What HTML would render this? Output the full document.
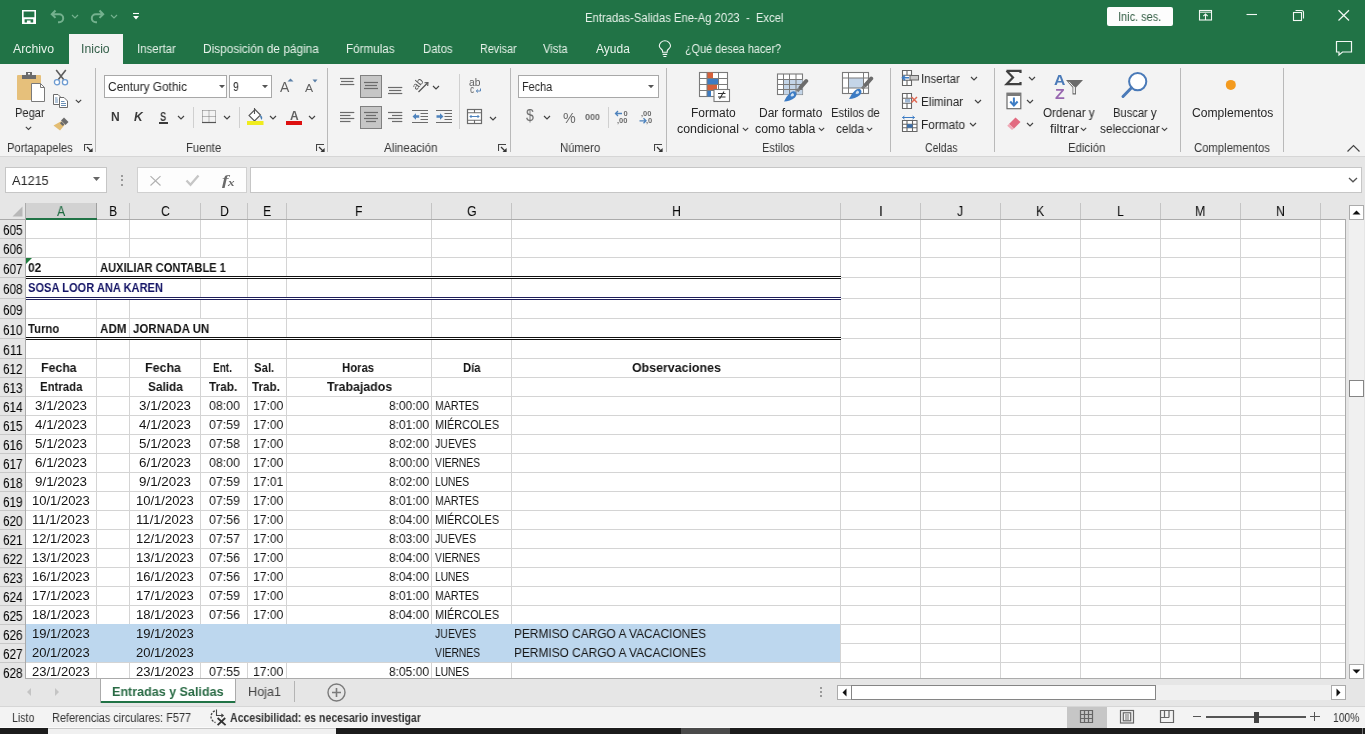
<!DOCTYPE html>
<html><head><meta charset="utf-8"><style>
html,body{margin:0;padding:0;width:1365px;height:734px;overflow:hidden;background:#fff}
body{position:relative;font-family:'Liberation Sans',sans-serif}
.a{position:absolute;display:block}
.t{white-space:pre;line-height:1;transform-origin:0 0;will-change:transform}
</style></head><body>
<div class=a style="left:0px;top:0px;width:1365px;height:64px;background:#217346;"></div>
<div class=a style="left:0px;top:64px;width:1365px;height:92px;background:#f3f3f3;"></div>
<div class=a style="left:0px;top:156px;width:1365px;height:1px;background:#d6d6d6;"></div>
<div class=a style="left:0px;top:157px;width:1365px;height:63px;background:#e6e6e6;"></div>
<div class="a t" style="left:585.00px;top:12.00px;font-size:12px;color:#e7f2ea;transform:scaleX(0.9388);">Entradas-Salidas Ene-Ag 2023  -  Excel</div>
<div class=a style="left:1107px;top:7px;width:66px;height:19px;background:#fdfdfd;border-radius:2px"></div>
<div class="a t" style="left:1118.40px;top:11.00px;font-size:12px;color:#355f46;transform:scaleX(0.9145);">Inic. ses.</div>
<div class=a style="left:69px;top:34px;width:54px;height:30px;background:#f3f3f3;"></div>
<div class="a t" style="left:13.20px;top:43.00px;font-size:12px;color:#e7f2ea;transform:scaleX(1.0246);">Archivo</div>
<div class="a t" style="left:137.00px;top:43.00px;font-size:12px;color:#e7f2ea;transform:scaleX(0.9537);">Insertar</div>
<div class="a t" style="left:203.00px;top:43.00px;font-size:12px;color:#e7f2ea;transform:scaleX(0.9863);">Disposición de página</div>
<div class="a t" style="left:346.40px;top:43.00px;font-size:12px;color:#e7f2ea;transform:scaleX(0.9718);">Fórmulas</div>
<div class="a t" style="left:422.60px;top:43.00px;font-size:12px;color:#e7f2ea;transform:scaleX(0.9442);">Datos</div>
<div class="a t" style="left:479.70px;top:43.00px;font-size:12px;color:#e7f2ea;transform:scaleX(0.8998);">Revisar</div>
<div class="a t" style="left:543.30px;top:43.00px;font-size:12px;color:#e7f2ea;transform:scaleX(0.9297);">Vista</div>
<div class="a t" style="left:595.60px;top:43.00px;font-size:12px;color:#e7f2ea;transform:scaleX(0.9938);">Ayuda</div>
<div class="a t" style="left:685.00px;top:43.00px;font-size:12px;color:#e7f2ea;transform:scaleX(0.9051);">¿Qué desea hacer?</div>
<div class="a t" style="left:81.20px;top:43.00px;font-size:12px;color:#35604a;transform:scaleX(1.0245);">Inicio</div>
<div class=a style="left:95px;top:68px;width:1px;height:84px;background:#b9b9b9;"></div>
<div class=a style="left:327px;top:68px;width:1px;height:84px;background:#b9b9b9;"></div>
<div class=a style="left:510px;top:68px;width:1px;height:84px;background:#b9b9b9;"></div>
<div class=a style="left:666px;top:68px;width:1px;height:84px;background:#b9b9b9;"></div>
<div class=a style="left:890px;top:68px;width:1px;height:84px;background:#b9b9b9;"></div>
<div class=a style="left:994px;top:68px;width:1px;height:84px;background:#b9b9b9;"></div>
<div class=a style="left:1180px;top:68px;width:1px;height:84px;background:#b9b9b9;"></div>
<div class=a style="left:1283px;top:68px;width:1px;height:84px;background:#b9b9b9;"></div>
<div class="a t" style="left:6.70px;top:142.00px;font-size:12px;color:#363636;transform:scaleX(0.9291);">Portapapeles</div>
<div class="a t" style="left:185.50px;top:142.00px;font-size:12px;color:#363636;transform:scaleX(0.9422);">Fuente</div>
<div class="a t" style="left:383.50px;top:142.00px;font-size:12px;color:#363636;transform:scaleX(0.9662);">Alineación</div>
<div class="a t" style="left:560.00px;top:142.00px;font-size:12px;color:#363636;transform:scaleX(0.9419);">Número</div>
<div class="a t" style="left:761.90px;top:142.00px;font-size:12px;color:#363636;transform:scaleX(0.9195);">Estilos</div>
<div class="a t" style="left:925.40px;top:142.00px;font-size:12px;color:#363636;transform:scaleX(0.8727);">Celdas</div>
<div class="a t" style="left:1068.20px;top:142.00px;font-size:12px;color:#363636;transform:scaleX(0.9503);">Edición</div>
<div class="a t" style="left:1193.80px;top:142.00px;font-size:12px;color:#363636;transform:scaleX(0.9405);">Complementos</div>
<div class="a t" style="left:14.60px;top:107.00px;font-size:12px;color:#262626;transform:scaleX(0.9244);">Pegar</div>
<div class="a t" style="left:690.60px;top:107.00px;font-size:12px;color:#262626;">Formato</div>
<div class="a t" style="left:677.00px;top:123.00px;font-size:12px;color:#262626;transform:scaleX(1.0326);">condicional</div>
<div class="a t" style="left:758.50px;top:107.00px;font-size:12px;color:#262626;">Dar formato</div>
<div class="a t" style="left:755.00px;top:123.00px;font-size:12px;color:#262626;transform:scaleX(1.0307);">como tabla</div>
<div class="a t" style="left:831.00px;top:107.00px;font-size:12px;color:#262626;transform:scaleX(0.9380);">Estilos de</div>
<div class="a t" style="left:836.00px;top:123.00px;font-size:12px;color:#262626;transform:scaleX(0.9760);">celda</div>
<div class="a t" style="left:920.90px;top:73.00px;font-size:12px;color:#262626;transform:scaleX(0.9537);">Insertar</div>
<div class="a t" style="left:921.20px;top:96.00px;font-size:12px;color:#262626;transform:scaleX(0.9713);">Eliminar</div>
<div class="a t" style="left:921.20px;top:119.00px;font-size:12px;color:#262626;transform:scaleX(0.9848);">Formato</div>
<div class="a t" style="left:1043.00px;top:107.00px;font-size:12px;color:#262626;transform:scaleX(0.9690);">Ordenar y</div>
<div class="a t" style="left:1050.00px;top:123.00px;font-size:12px;color:#262626;transform:scaleX(1.0875);">filtrar</div>
<div class="a t" style="left:1113.40px;top:107.00px;font-size:12px;color:#262626;transform:scaleX(0.9297);">Buscar y</div>
<div class="a t" style="left:1100.40px;top:123.00px;font-size:12px;color:#262626;transform:scaleX(0.9819);">seleccionar</div>
<div class="a t" style="left:1191.70px;top:107.00px;font-size:12px;color:#262626;transform:scaleX(1.0087);">Complementos</div>
<div class=a style="left:104px;top:75px;width:123px;height:23px;background:#fff;box-sizing:border-box;border:1px solid #a8a8a8"></div>
<div class=a style="left:229px;top:75px;width:43px;height:23px;background:#fff;box-sizing:border-box;border:1px solid #a8a8a8"></div>
<div class=a style="left:518px;top:75px;width:141px;height:23px;background:#fff;box-sizing:border-box;border:1px solid #a8a8a8"></div>
<div class="a t" style="left:107.70px;top:81.00px;font-size:12px;color:#262626;transform:scaleX(0.9883);">Century Gothic</div>
<div class="a t" style="left:232.50px;top:81.00px;font-size:12px;color:#262626;transform:scaleX(0.8691);">9</div>
<div class="a t" style="left:521.70px;top:81.00px;font-size:12px;color:#262626;transform:scaleX(0.9025);">Fecha</div>
<div class=a style="left:5px;top:167px;width:102px;height:26px;background:#fff;box-sizing:border-box;border:1px solid #c6c6c6"></div>
<div class="a t" style="left:11.90px;top:174.00px;font-size:13px;color:#262626;transform:scaleX(0.9763);">A1215</div>
<div class=a style="left:137px;top:167px;width:110px;height:26px;background:#fdfdfd;box-sizing:border-box;border:1px solid #d0d0d0"></div>
<div class=a style="left:250px;top:167px;width:1112px;height:26px;background:#fff;box-sizing:border-box;border:1px solid #c6c6c6"></div>
<div class=a style="left:26px;top:203px;width:70px;height:15px;background:#d2d2d2;"></div>
<div class=a style="left:96px;top:203px;width:1px;height:16px;background:#c4c4c4;"></div>
<div class=a style="left:129px;top:203px;width:1px;height:16px;background:#c4c4c4;"></div>
<div class=a style="left:200px;top:203px;width:1px;height:16px;background:#c4c4c4;"></div>
<div class=a style="left:247px;top:203px;width:1px;height:16px;background:#c4c4c4;"></div>
<div class=a style="left:286px;top:203px;width:1px;height:16px;background:#c4c4c4;"></div>
<div class=a style="left:431px;top:203px;width:1px;height:16px;background:#c4c4c4;"></div>
<div class=a style="left:511px;top:203px;width:1px;height:16px;background:#c4c4c4;"></div>
<div class=a style="left:840px;top:203px;width:1px;height:16px;background:#c4c4c4;"></div>
<div class=a style="left:920px;top:203px;width:1px;height:16px;background:#c4c4c4;"></div>
<div class=a style="left:1000px;top:203px;width:1px;height:16px;background:#c4c4c4;"></div>
<div class=a style="left:1080px;top:203px;width:1px;height:16px;background:#c4c4c4;"></div>
<div class=a style="left:1160px;top:203px;width:1px;height:16px;background:#c4c4c4;"></div>
<div class=a style="left:1240px;top:203px;width:1px;height:16px;background:#c4c4c4;"></div>
<div class=a style="left:1320px;top:203px;width:1px;height:16px;background:#c4c4c4;"></div>
<div class=a style="left:96px;top:203px;width:1px;height:16px;background:#a0a0a0;"></div>
<div class=a style="left:0px;top:219px;width:1346px;height:1px;background:#ababab;"></div>
<div class=a style="left:26px;top:218px;width:71px;height:2px;background:#217346;"></div>
<svg class=a style="left:12px;top:206px;" width="12" height="11" viewBox="0 0 12 11"><path d="M10.5 0.5 L10.5 10.5 L0.5 10.5 Z" fill="#b8b8b8"/></svg>
<div class=a style="left:26px;top:220px;width:1319px;height:459px;background:#fff;"></div>
<div class=a style="left:26px;top:238px;width:1319px;height:1px;background:#d4d4d4;"></div>
<div class=a style="left:26px;top:257px;width:1319px;height:1px;background:#d4d4d4;"></div>
<div class=a style="left:26px;top:277px;width:1319px;height:1px;background:#d4d4d4;"></div>
<div class=a style="left:26px;top:298px;width:1319px;height:1px;background:#d4d4d4;"></div>
<div class=a style="left:26px;top:318px;width:1319px;height:1px;background:#d4d4d4;"></div>
<div class=a style="left:26px;top:338px;width:1319px;height:1px;background:#d4d4d4;"></div>
<div class=a style="left:26px;top:358px;width:1319px;height:1px;background:#d4d4d4;"></div>
<div class=a style="left:26px;top:377px;width:1319px;height:1px;background:#d4d4d4;"></div>
<div class=a style="left:26px;top:396px;width:1319px;height:1px;background:#d4d4d4;"></div>
<div class=a style="left:26px;top:415px;width:1319px;height:1px;background:#d4d4d4;"></div>
<div class=a style="left:26px;top:434px;width:1319px;height:1px;background:#d4d4d4;"></div>
<div class=a style="left:26px;top:453px;width:1319px;height:1px;background:#d4d4d4;"></div>
<div class=a style="left:26px;top:472px;width:1319px;height:1px;background:#d4d4d4;"></div>
<div class=a style="left:26px;top:491px;width:1319px;height:1px;background:#d4d4d4;"></div>
<div class=a style="left:26px;top:510px;width:1319px;height:1px;background:#d4d4d4;"></div>
<div class=a style="left:26px;top:529px;width:1319px;height:1px;background:#d4d4d4;"></div>
<div class=a style="left:26px;top:548px;width:1319px;height:1px;background:#d4d4d4;"></div>
<div class=a style="left:26px;top:567px;width:1319px;height:1px;background:#d4d4d4;"></div>
<div class=a style="left:26px;top:586px;width:1319px;height:1px;background:#d4d4d4;"></div>
<div class=a style="left:26px;top:605px;width:1319px;height:1px;background:#d4d4d4;"></div>
<div class=a style="left:26px;top:624px;width:1319px;height:1px;background:#d4d4d4;"></div>
<div class=a style="left:26px;top:643px;width:1319px;height:1px;background:#d4d4d4;"></div>
<div class=a style="left:26px;top:662px;width:1319px;height:1px;background:#d4d4d4;"></div>
<div class=a style="left:96px;top:220px;width:1px;height:459px;background:#d4d4d4;"></div>
<div class=a style="left:129px;top:220px;width:1px;height:459px;background:#d4d4d4;"></div>
<div class=a style="left:200px;top:220px;width:1px;height:459px;background:#d4d4d4;"></div>
<div class=a style="left:247px;top:220px;width:1px;height:459px;background:#d4d4d4;"></div>
<div class=a style="left:286px;top:220px;width:1px;height:459px;background:#d4d4d4;"></div>
<div class=a style="left:431px;top:220px;width:1px;height:459px;background:#d4d4d4;"></div>
<div class=a style="left:511px;top:220px;width:1px;height:459px;background:#d4d4d4;"></div>
<div class=a style="left:840px;top:220px;width:1px;height:459px;background:#d4d4d4;"></div>
<div class=a style="left:920px;top:220px;width:1px;height:459px;background:#d4d4d4;"></div>
<div class=a style="left:1000px;top:220px;width:1px;height:459px;background:#d4d4d4;"></div>
<div class=a style="left:1080px;top:220px;width:1px;height:459px;background:#d4d4d4;"></div>
<div class=a style="left:1160px;top:220px;width:1px;height:459px;background:#d4d4d4;"></div>
<div class=a style="left:1240px;top:220px;width:1px;height:459px;background:#d4d4d4;"></div>
<div class=a style="left:1320px;top:220px;width:1px;height:459px;background:#d4d4d4;"></div>
<div class=a style="left:1345px;top:220px;width:1px;height:459px;background:#ababab;"></div>
<div class=a style="left:0px;top:678px;width:1346px;height:1px;background:#ababab;"></div>
<div class=a style="left:0px;top:220px;width:25px;height:459px;background:#e6e6e6;"></div>
<div class=a style="left:25px;top:203px;width:1px;height:476px;background:#ababab;"></div>
<div class=a style="left:0px;top:238px;width:25px;height:1px;background:#c8c8c8;"></div>
<div class=a style="left:0px;top:257px;width:25px;height:1px;background:#c8c8c8;"></div>
<div class=a style="left:0px;top:277px;width:25px;height:1px;background:#c8c8c8;"></div>
<div class=a style="left:0px;top:298px;width:25px;height:1px;background:#c8c8c8;"></div>
<div class=a style="left:0px;top:318px;width:25px;height:1px;background:#c8c8c8;"></div>
<div class=a style="left:0px;top:338px;width:25px;height:1px;background:#c8c8c8;"></div>
<div class=a style="left:0px;top:358px;width:25px;height:1px;background:#c8c8c8;"></div>
<div class=a style="left:0px;top:377px;width:25px;height:1px;background:#c8c8c8;"></div>
<div class=a style="left:0px;top:396px;width:25px;height:1px;background:#c8c8c8;"></div>
<div class=a style="left:0px;top:415px;width:25px;height:1px;background:#c8c8c8;"></div>
<div class=a style="left:0px;top:434px;width:25px;height:1px;background:#c8c8c8;"></div>
<div class=a style="left:0px;top:453px;width:25px;height:1px;background:#c8c8c8;"></div>
<div class=a style="left:0px;top:472px;width:25px;height:1px;background:#c8c8c8;"></div>
<div class=a style="left:0px;top:491px;width:25px;height:1px;background:#c8c8c8;"></div>
<div class=a style="left:0px;top:510px;width:25px;height:1px;background:#c8c8c8;"></div>
<div class=a style="left:0px;top:529px;width:25px;height:1px;background:#c8c8c8;"></div>
<div class=a style="left:0px;top:548px;width:25px;height:1px;background:#c8c8c8;"></div>
<div class=a style="left:0px;top:567px;width:25px;height:1px;background:#c8c8c8;"></div>
<div class=a style="left:0px;top:586px;width:25px;height:1px;background:#c8c8c8;"></div>
<div class=a style="left:0px;top:605px;width:25px;height:1px;background:#c8c8c8;"></div>
<div class=a style="left:0px;top:624px;width:25px;height:1px;background:#c8c8c8;"></div>
<div class=a style="left:0px;top:643px;width:25px;height:1px;background:#c8c8c8;"></div>
<div class=a style="left:0px;top:662px;width:25px;height:1px;background:#c8c8c8;"></div>
<div class=a style="left:127px;top:258px;width:3px;height:18px;background:#fff;"></div>
<div class=a style="left:198px;top:258px;width:3px;height:18px;background:#fff;"></div>
<div class=a style="left:95px;top:279px;width:3px;height:18px;background:#fff;"></div>
<div class=a style="left:128px;top:279px;width:3px;height:18px;background:#fff;"></div>
<div class=a style="left:198px;top:319px;width:3px;height:18px;background:#fff;"></div>
<div class=a style="left:26px;top:276px;width:815px;height:1px;background:#111;"></div>
<div class=a style="left:26px;top:277px;width:815px;height:1px;background:#fff;"></div>
<div class=a style="left:26px;top:278px;width:815px;height:1px;background:#111;"></div>
<div class=a style="left:26px;top:297px;width:815px;height:1px;background:#1e1e5a;"></div>
<div class=a style="left:26px;top:298px;width:815px;height:1px;background:#fff;"></div>
<div class=a style="left:26px;top:299px;width:815px;height:1px;background:#1e1e5a;"></div>
<div class=a style="left:26px;top:337px;width:815px;height:1px;background:#111;"></div>
<div class=a style="left:26px;top:338px;width:815px;height:1px;background:#fff;"></div>
<div class=a style="left:26px;top:339px;width:815px;height:1px;background:#111;"></div>
<div class=a style="left:26px;top:624px;width:814px;height:38px;background:#bdd7ee;"></div>
<svg class=a style="left:26px;top:258px;" width="7" height="7" viewBox="0 0 7 7"><path d="M0 0 H6 L0 6 Z" fill="#1e7b3c"/></svg>
<div class="a t" style="left:56.89px;top:204.00px;font-size:14px;color:#1d6a40;transform:scaleX(0.8800);">A</div>
<div class="a t" style="left:108.89px;top:204.00px;font-size:14px;color:#0a0a0a;transform:scaleX(0.8800);">B</div>
<div class="a t" style="left:160.55px;top:204.00px;font-size:14px;color:#0a0a0a;transform:scaleX(0.8800);">C</div>
<div class="a t" style="left:219.55px;top:204.00px;font-size:14px;color:#0a0a0a;transform:scaleX(0.8800);">D</div>
<div class="a t" style="left:262.89px;top:204.00px;font-size:14px;color:#0a0a0a;transform:scaleX(0.8800);">E</div>
<div class="a t" style="left:355.24px;top:204.00px;font-size:14px;color:#0a0a0a;transform:scaleX(0.8800);">F</div>
<div class="a t" style="left:466.71px;top:204.00px;font-size:14px;color:#0a0a0a;transform:scaleX(0.8800);">G</div>
<div class="a t" style="left:671.55px;top:204.00px;font-size:14px;color:#0a0a0a;transform:scaleX(0.8800);">H</div>
<div class="a t" style="left:878.79px;top:204.00px;font-size:14px;color:#0a0a0a;transform:scaleX(0.8800);">I</div>
<div class="a t" style="left:957.42px;top:204.00px;font-size:14px;color:#0a0a0a;transform:scaleX(0.8800);">J</div>
<div class="a t" style="left:1036.39px;top:204.00px;font-size:14px;color:#0a0a0a;transform:scaleX(0.8800);">K</div>
<div class="a t" style="left:1117.07px;top:204.00px;font-size:14px;color:#0a0a0a;transform:scaleX(0.8800);">L</div>
<div class="a t" style="left:1195.37px;top:204.00px;font-size:14px;color:#0a0a0a;transform:scaleX(0.8800);">M</div>
<div class="a t" style="left:1276.05px;top:204.00px;font-size:14px;color:#0a0a0a;transform:scaleX(0.8800);">N</div>
<div class="a t" style="left:2.70px;top:223.00px;font-size:14px;color:#000;transform:scaleX(0.8391);">605</div>
<div class="a t" style="left:2.70px;top:242.00px;font-size:14px;color:#000;transform:scaleX(0.8391);">606</div>
<div class="a t" style="left:2.70px;top:262.00px;font-size:14px;color:#000;transform:scaleX(0.8391);">607</div>
<div class="a t" style="left:2.70px;top:282.00px;font-size:14px;color:#000;transform:scaleX(0.8391);">608</div>
<div class="a t" style="left:2.70px;top:303.00px;font-size:14px;color:#000;transform:scaleX(0.8391);">609</div>
<div class="a t" style="left:2.70px;top:323.00px;font-size:14px;color:#000;transform:scaleX(0.8391);">610</div>
<div class="a t" style="left:2.70px;top:343.00px;font-size:14px;color:#000;transform:scaleX(0.8782);">611</div>
<div class="a t" style="left:2.70px;top:362.00px;font-size:14px;color:#000;transform:scaleX(0.8391);">612</div>
<div class="a t" style="left:2.70px;top:381.00px;font-size:14px;color:#000;transform:scaleX(0.8391);">613</div>
<div class="a t" style="left:2.70px;top:400.00px;font-size:14px;color:#000;transform:scaleX(0.8391);">614</div>
<div class="a t" style="left:2.70px;top:419.00px;font-size:14px;color:#000;transform:scaleX(0.8391);">615</div>
<div class="a t" style="left:2.70px;top:438.00px;font-size:14px;color:#000;transform:scaleX(0.8391);">616</div>
<div class="a t" style="left:2.70px;top:457.00px;font-size:14px;color:#000;transform:scaleX(0.8391);">617</div>
<div class="a t" style="left:2.70px;top:476.00px;font-size:14px;color:#000;transform:scaleX(0.8391);">618</div>
<div class="a t" style="left:2.70px;top:495.00px;font-size:14px;color:#000;transform:scaleX(0.8391);">619</div>
<div class="a t" style="left:2.70px;top:514.00px;font-size:14px;color:#000;transform:scaleX(0.8391);">620</div>
<div class="a t" style="left:2.70px;top:533.00px;font-size:14px;color:#000;transform:scaleX(0.8391);">621</div>
<div class="a t" style="left:2.70px;top:552.00px;font-size:14px;color:#000;transform:scaleX(0.8391);">622</div>
<div class="a t" style="left:2.70px;top:571.00px;font-size:14px;color:#000;transform:scaleX(0.8391);">623</div>
<div class="a t" style="left:2.70px;top:590.00px;font-size:14px;color:#000;transform:scaleX(0.8391);">624</div>
<div class="a t" style="left:2.70px;top:609.00px;font-size:14px;color:#000;transform:scaleX(0.8391);">625</div>
<div class="a t" style="left:2.70px;top:628.00px;font-size:14px;color:#000;transform:scaleX(0.8391);">626</div>
<div class="a t" style="left:2.70px;top:647.00px;font-size:14px;color:#000;transform:scaleX(0.8391);">627</div>
<div class="a t" style="left:2.70px;top:666.00px;font-size:14px;color:#000;transform:scaleX(0.8391);">628</div>
<div class="a t" style="left:28.40px;top:261.00px;font-size:13px;color:#141414;font-weight:700;transform:scaleX(0.9129);">02</div>
<div class="a t" style="left:100.00px;top:261.00px;font-size:13px;color:#141414;font-weight:700;transform:scaleX(0.8559);">AUXILIAR CONTABLE 1</div>
<div class="a t" style="left:28.40px;top:281.00px;font-size:13px;color:#141466;font-weight:700;transform:scaleX(0.8533);">SOSA LOOR ANA KAREN</div>
<div class="a t" style="left:28.40px;top:322.00px;font-size:13px;color:#141414;font-weight:700;transform:scaleX(0.8701);">Turno</div>
<div class="a t" style="left:100.00px;top:322.00px;font-size:13px;color:#141414;font-weight:700;transform:scaleX(0.8951);">ADM</div>
<div class="a t" style="left:132.90px;top:322.00px;font-size:13px;color:#141414;font-weight:700;transform:scaleX(0.8850);">JORNADA UN</div>
<div class="a t" style="left:40.70px;top:361.00px;font-size:13px;color:#141414;font-weight:700;transform:scaleX(0.9475);">Fecha</div>
<div class="a t" style="left:144.50px;top:361.00px;font-size:13px;color:#141414;font-weight:700;transform:scaleX(0.9555);">Fecha</div>
<div class="a t" style="left:213.40px;top:361.00px;font-size:13px;color:#141414;font-weight:700;transform:scaleX(0.7698);">Ent.</div>
<div class="a t" style="left:253.80px;top:361.00px;font-size:13px;color:#141414;font-weight:700;transform:scaleX(0.8735);">Sal.</div>
<div class="a t" style="left:341.90px;top:361.00px;font-size:13px;color:#141414;font-weight:700;transform:scaleX(0.8711);">Horas</div>
<div class="a t" style="left:462.90px;top:361.00px;font-size:13px;color:#141414;font-weight:700;transform:scaleX(0.8651);">Día</div>
<div class="a t" style="left:631.50px;top:361.00px;font-size:13px;color:#141414;font-weight:700;transform:scaleX(0.9537);">Observaciones</div>
<div class="a t" style="left:39.80px;top:380.00px;font-size:13px;color:#141414;font-weight:700;transform:scaleX(0.8760);">Entrada</div>
<div class="a t" style="left:147.60px;top:380.00px;font-size:13px;color:#141414;font-weight:700;transform:scaleX(0.9113);">Salida</div>
<div class="a t" style="left:208.70px;top:380.00px;font-size:13px;color:#141414;font-weight:700;transform:scaleX(0.9110);">Trab.</div>
<div class="a t" style="left:252.20px;top:380.00px;font-size:13px;color:#141414;font-weight:700;transform:scaleX(0.8981);">Trab.</div>
<div class="a t" style="left:327.10px;top:380.00px;font-size:13px;color:#141414;font-weight:700;transform:scaleX(0.9485);">Trabajados</div>
<div class="a t" style="left:34.75px;top:399.00px;font-size:13px;color:#141414;transform:scaleX(1.0276);">3/1/2023</div>
<div class="a t" style="left:138.85px;top:399.00px;font-size:13px;color:#141414;transform:scaleX(1.0276);">3/1/2023</div>
<div class="a t" style="left:209.00px;top:399.00px;font-size:13px;color:#141414;transform:scaleX(0.9529);">08:00</div>
<div class="a t" style="left:252.70px;top:399.00px;font-size:13px;color:#141414;transform:scaleX(0.9345);">17:00</div>
<div class="a t" style="left:388.80px;top:399.00px;font-size:13px;color:#141414;transform:scaleX(0.9222);">8:00:00</div>
<div class="a t" style="left:434.60px;top:399.00px;font-size:13px;color:#141414;transform:scaleX(0.8158);">MARTES</div>
<div class="a t" style="left:34.75px;top:418.00px;font-size:13px;color:#141414;transform:scaleX(1.0276);">4/1/2023</div>
<div class="a t" style="left:138.85px;top:418.00px;font-size:13px;color:#141414;transform:scaleX(1.0276);">4/1/2023</div>
<div class="a t" style="left:209.00px;top:418.00px;font-size:13px;color:#141414;transform:scaleX(0.9529);">07:59</div>
<div class="a t" style="left:252.70px;top:418.00px;font-size:13px;color:#141414;transform:scaleX(0.9345);">17:00</div>
<div class="a t" style="left:388.80px;top:418.00px;font-size:13px;color:#141414;transform:scaleX(0.9222);">8:01:00</div>
<div class="a t" style="left:434.60px;top:418.00px;font-size:13px;color:#141414;transform:scaleX(0.8358);">MIÉRCOLES</div>
<div class="a t" style="left:34.75px;top:437.00px;font-size:13px;color:#141414;transform:scaleX(1.0276);">5/1/2023</div>
<div class="a t" style="left:138.85px;top:437.00px;font-size:13px;color:#141414;transform:scaleX(1.0276);">5/1/2023</div>
<div class="a t" style="left:209.00px;top:437.00px;font-size:13px;color:#141414;transform:scaleX(0.9529);">07:58</div>
<div class="a t" style="left:252.70px;top:437.00px;font-size:13px;color:#141414;transform:scaleX(0.9345);">17:00</div>
<div class="a t" style="left:388.80px;top:437.00px;font-size:13px;color:#141414;transform:scaleX(0.9222);">8:02:00</div>
<div class="a t" style="left:434.60px;top:437.00px;font-size:13px;color:#141414;transform:scaleX(0.8107);">JUEVES</div>
<div class="a t" style="left:34.75px;top:456.00px;font-size:13px;color:#141414;transform:scaleX(1.0276);">6/1/2023</div>
<div class="a t" style="left:138.85px;top:456.00px;font-size:13px;color:#141414;transform:scaleX(1.0276);">6/1/2023</div>
<div class="a t" style="left:209.00px;top:456.00px;font-size:13px;color:#141414;transform:scaleX(0.9529);">08:00</div>
<div class="a t" style="left:252.70px;top:456.00px;font-size:13px;color:#141414;transform:scaleX(0.9345);">17:00</div>
<div class="a t" style="left:388.80px;top:456.00px;font-size:13px;color:#141414;transform:scaleX(0.9222);">8:00:00</div>
<div class="a t" style="left:434.60px;top:456.00px;font-size:13px;color:#141414;transform:scaleX(0.7885);">VIERNES</div>
<div class="a t" style="left:34.75px;top:475.00px;font-size:13px;color:#141414;transform:scaleX(1.0276);">9/1/2023</div>
<div class="a t" style="left:138.85px;top:475.00px;font-size:13px;color:#141414;transform:scaleX(1.0276);">9/1/2023</div>
<div class="a t" style="left:209.00px;top:475.00px;font-size:13px;color:#141414;transform:scaleX(0.9529);">07:59</div>
<div class="a t" style="left:252.70px;top:475.00px;font-size:13px;color:#141414;transform:scaleX(0.9345);">17:01</div>
<div class="a t" style="left:388.80px;top:475.00px;font-size:13px;color:#141414;transform:scaleX(0.9222);">8:02:00</div>
<div class="a t" style="left:434.60px;top:475.00px;font-size:13px;color:#141414;transform:scaleX(0.7843);">LUNES</div>
<div class="a t" style="left:32.00px;top:494.00px;font-size:13px;color:#141414;transform:scaleX(0.9942);">10/1/2023</div>
<div class="a t" style="left:136.10px;top:494.00px;font-size:13px;color:#141414;transform:scaleX(0.9942);">10/1/2023</div>
<div class="a t" style="left:209.00px;top:494.00px;font-size:13px;color:#141414;transform:scaleX(0.9529);">07:59</div>
<div class="a t" style="left:252.70px;top:494.00px;font-size:13px;color:#141414;transform:scaleX(0.9345);">17:00</div>
<div class="a t" style="left:388.80px;top:494.00px;font-size:13px;color:#141414;transform:scaleX(0.9222);">8:01:00</div>
<div class="a t" style="left:434.60px;top:494.00px;font-size:13px;color:#141414;transform:scaleX(0.8158);">MARTES</div>
<div class="a t" style="left:32.00px;top:513.00px;font-size:13px;color:#141414;transform:scaleX(1.0111);">11/1/2023</div>
<div class="a t" style="left:136.10px;top:513.00px;font-size:13px;color:#141414;transform:scaleX(1.0111);">11/1/2023</div>
<div class="a t" style="left:209.00px;top:513.00px;font-size:13px;color:#141414;transform:scaleX(0.9529);">07:56</div>
<div class="a t" style="left:252.70px;top:513.00px;font-size:13px;color:#141414;transform:scaleX(0.9345);">17:00</div>
<div class="a t" style="left:388.80px;top:513.00px;font-size:13px;color:#141414;transform:scaleX(0.9222);">8:04:00</div>
<div class="a t" style="left:434.60px;top:513.00px;font-size:13px;color:#141414;transform:scaleX(0.8358);">MIÉRCOLES</div>
<div class="a t" style="left:32.00px;top:532.00px;font-size:13px;color:#141414;transform:scaleX(0.9942);">12/1/2023</div>
<div class="a t" style="left:136.10px;top:532.00px;font-size:13px;color:#141414;transform:scaleX(0.9942);">12/1/2023</div>
<div class="a t" style="left:209.00px;top:532.00px;font-size:13px;color:#141414;transform:scaleX(0.9529);">07:57</div>
<div class="a t" style="left:252.70px;top:532.00px;font-size:13px;color:#141414;transform:scaleX(0.9345);">17:00</div>
<div class="a t" style="left:388.80px;top:532.00px;font-size:13px;color:#141414;transform:scaleX(0.9222);">8:03:00</div>
<div class="a t" style="left:434.60px;top:532.00px;font-size:13px;color:#141414;transform:scaleX(0.8107);">JUEVES</div>
<div class="a t" style="left:32.00px;top:551.00px;font-size:13px;color:#141414;transform:scaleX(0.9942);">13/1/2023</div>
<div class="a t" style="left:136.10px;top:551.00px;font-size:13px;color:#141414;transform:scaleX(0.9942);">13/1/2023</div>
<div class="a t" style="left:209.00px;top:551.00px;font-size:13px;color:#141414;transform:scaleX(0.9529);">07:56</div>
<div class="a t" style="left:252.70px;top:551.00px;font-size:13px;color:#141414;transform:scaleX(0.9345);">17:00</div>
<div class="a t" style="left:388.80px;top:551.00px;font-size:13px;color:#141414;transform:scaleX(0.9222);">8:04:00</div>
<div class="a t" style="left:434.60px;top:551.00px;font-size:13px;color:#141414;transform:scaleX(0.7885);">VIERNES</div>
<div class="a t" style="left:32.00px;top:570.00px;font-size:13px;color:#141414;transform:scaleX(0.9942);">16/1/2023</div>
<div class="a t" style="left:136.10px;top:570.00px;font-size:13px;color:#141414;transform:scaleX(0.9942);">16/1/2023</div>
<div class="a t" style="left:209.00px;top:570.00px;font-size:13px;color:#141414;transform:scaleX(0.9529);">07:56</div>
<div class="a t" style="left:252.70px;top:570.00px;font-size:13px;color:#141414;transform:scaleX(0.9345);">17:00</div>
<div class="a t" style="left:388.80px;top:570.00px;font-size:13px;color:#141414;transform:scaleX(0.9222);">8:04:00</div>
<div class="a t" style="left:434.60px;top:570.00px;font-size:13px;color:#141414;transform:scaleX(0.7843);">LUNES</div>
<div class="a t" style="left:32.00px;top:589.00px;font-size:13px;color:#141414;transform:scaleX(0.9942);">17/1/2023</div>
<div class="a t" style="left:136.10px;top:589.00px;font-size:13px;color:#141414;transform:scaleX(0.9942);">17/1/2023</div>
<div class="a t" style="left:209.00px;top:589.00px;font-size:13px;color:#141414;transform:scaleX(0.9529);">07:59</div>
<div class="a t" style="left:252.70px;top:589.00px;font-size:13px;color:#141414;transform:scaleX(0.9345);">17:00</div>
<div class="a t" style="left:388.80px;top:589.00px;font-size:13px;color:#141414;transform:scaleX(0.9222);">8:01:00</div>
<div class="a t" style="left:434.60px;top:589.00px;font-size:13px;color:#141414;transform:scaleX(0.8158);">MARTES</div>
<div class="a t" style="left:32.00px;top:608.00px;font-size:13px;color:#141414;transform:scaleX(0.9942);">18/1/2023</div>
<div class="a t" style="left:136.10px;top:608.00px;font-size:13px;color:#141414;transform:scaleX(0.9942);">18/1/2023</div>
<div class="a t" style="left:209.00px;top:608.00px;font-size:13px;color:#141414;transform:scaleX(0.9529);">07:56</div>
<div class="a t" style="left:252.70px;top:608.00px;font-size:13px;color:#141414;transform:scaleX(0.9345);">17:00</div>
<div class="a t" style="left:388.80px;top:608.00px;font-size:13px;color:#141414;transform:scaleX(0.9222);">8:04:00</div>
<div class="a t" style="left:434.60px;top:608.00px;font-size:13px;color:#141414;transform:scaleX(0.8358);">MIÉRCOLES</div>
<div class="a t" style="left:32.00px;top:627.00px;font-size:13px;color:#141414;transform:scaleX(0.9942);">19/1/2023</div>
<div class="a t" style="left:136.10px;top:627.00px;font-size:13px;color:#141414;transform:scaleX(0.9942);">19/1/2023</div>
<div class="a t" style="left:434.60px;top:627.00px;font-size:13px;color:#141414;transform:scaleX(0.8107);">JUEVES</div>
<div class="a t" style="left:514.30px;top:627.00px;font-size:13px;color:#141414;transform:scaleX(0.9148);">PERMISO CARGO A VACACIONES</div>
<div class="a t" style="left:32.00px;top:646.00px;font-size:13px;color:#141414;transform:scaleX(0.9942);">20/1/2023</div>
<div class="a t" style="left:136.10px;top:646.00px;font-size:13px;color:#141414;transform:scaleX(0.9942);">20/1/2023</div>
<div class="a t" style="left:434.60px;top:646.00px;font-size:13px;color:#141414;transform:scaleX(0.7885);">VIERNES</div>
<div class="a t" style="left:514.30px;top:646.00px;font-size:13px;color:#141414;transform:scaleX(0.9148);">PERMISO CARGO A VACACIONES</div>
<div class="a t" style="left:32.00px;top:665.00px;font-size:13px;color:#141414;transform:scaleX(0.9942);">23/1/2023</div>
<div class="a t" style="left:136.10px;top:665.00px;font-size:13px;color:#141414;transform:scaleX(0.9942);">23/1/2023</div>
<div class="a t" style="left:209.00px;top:665.00px;font-size:13px;color:#141414;transform:scaleX(0.9529);">07:55</div>
<div class="a t" style="left:252.70px;top:665.00px;font-size:13px;color:#141414;transform:scaleX(0.9345);">17:00</div>
<div class="a t" style="left:388.80px;top:665.00px;font-size:13px;color:#141414;transform:scaleX(0.9222);">8:05:00</div>
<div class="a t" style="left:434.60px;top:665.00px;font-size:13px;color:#141414;transform:scaleX(0.7843);">LUNES</div>
<div class=a style="left:1346px;top:203px;width:19px;height:476px;background:#e6e6e6;"></div>
<div class=a style="left:1349px;top:220px;width:15px;height:444px;background:#f0f0f0;"></div>
<div class=a style="left:1349px;top:205px;width:15px;height:15px;background:#fff;box-sizing:border-box;border:1px solid #ababab"></div>
<svg class=a style="left:1349px;top:205px;" width="15" height="15" viewBox="0 0 15 15"><path d="M3.5 9.5 L7.5 5.5 L11.5 9.5 Z" fill="#111"/></svg>
<div class=a style="left:1349px;top:380px;width:15px;height:17px;background:#fff;box-sizing:border-box;border:1px solid #858585"></div>
<div class=a style="left:1349px;top:664px;width:15px;height:15px;background:#fff;box-sizing:border-box;border:1px solid #ababab"></div>
<svg class=a style="left:1349px;top:664px;" width="15" height="15" viewBox="0 0 15 15"><path d="M3.5 5.5 L7.5 9.5 L11.5 5.5 Z" fill="#111"/></svg>
<div class=a style="left:0px;top:679px;width:1365px;height:27px;background:#e6e6e6;"></div>
<div class=a style="left:100px;top:679px;width:136px;height:23px;background:#fff;"></div>
<div class=a style="left:100px;top:679px;width:1px;height:24px;background:#ababab;"></div>
<div class=a style="left:235px;top:679px;width:1px;height:24px;background:#ababab;"></div>
<div class=a style="left:101px;top:701px;width:134px;height:2px;background:#217346;"></div>
<div class="a t" style="left:112.00px;top:685.00px;font-size:13px;color:#2a6b45;font-weight:700;transform:scaleX(0.9645);">Entradas y Salidas</div>
<div class="a t" style="left:248.00px;top:685.00px;font-size:13px;color:#444;transform:scaleX(0.9716);">Hoja1</div>
<div class=a style="left:294px;top:681px;width:1px;height:21px;background:#b4b4b4;"></div>
<svg class=a style="left:325px;top:681px;" width="23" height="23" viewBox="0 0 23 23"><circle cx="11.5" cy="11.5" r="8.5" fill="none" stroke="#7a7a7a" stroke-width="1.4"/><path d="M11.5 7 V16 M7 11.5 H16" stroke="#7a7a7a" stroke-width="1.6"/></svg>
<svg class=a style="left:24px;top:686px;" width="10" height="12" viewBox="0 0 10 12"><path d="M7 2 L3 6 L7 10 Z" fill="#c4c4c4"/></svg>
<svg class=a style="left:52px;top:686px;" width="10" height="12" viewBox="0 0 10 12"><path d="M3 2 L7 6 L3 10 Z" fill="#c4c4c4"/></svg>
<div class=a style="left:820px;top:687px;width:2px;height:2px;background:#9a9a9a;"></div>
<div class=a style="left:820px;top:691px;width:2px;height:2px;background:#9a9a9a;"></div>
<div class=a style="left:820px;top:695px;width:2px;height:2px;background:#9a9a9a;"></div>
<div class=a style="left:837px;top:685px;width:509px;height:15px;background:#f0f0f0;"></div>
<div class=a style="left:837px;top:685px;width:15px;height:15px;background:#fff;box-sizing:border-box;border:1px solid #ababab"></div>
<svg class=a style="left:837px;top:685px;" width="15" height="15" viewBox="0 0 15 15"><path d="M9.5 3.5 L5.5 7.5 L9.5 11.5 Z" fill="#111"/></svg>
<div class=a style="left:851px;top:685px;width:305px;height:15px;background:#fff;box-sizing:border-box;border:1px solid #858585"></div>
<div class=a style="left:1331px;top:685px;width:15px;height:15px;background:#fff;box-sizing:border-box;border:1px solid #ababab"></div>
<svg class=a style="left:1331px;top:685px;" width="15" height="15" viewBox="0 0 15 15"><path d="M5.5 3.5 L9.5 7.5 L5.5 11.5 Z" fill="#111"/></svg>
<div class=a style="left:0px;top:706px;width:1365px;height:1px;background:#d6d6d6;"></div>
<div class=a style="left:0px;top:707px;width:1365px;height:21px;background:#f3f3f3;"></div>
<div class=a style="left:0px;top:727px;width:1365px;height:1px;background:#fafafa;"></div>
<div class="a t" style="left:11.90px;top:712.00px;font-size:12px;color:#333;transform:scaleX(0.8837);">Listo</div>
<div class="a t" style="left:51.50px;top:712.00px;font-size:12px;color:#333;transform:scaleX(0.9101);">Referencias circulares: F577</div>
<div class="a t" style="left:229.50px;top:712.00px;font-size:12px;color:#333;font-weight:700;transform:scaleX(0.8780);">Accesibilidad: es necesario investigar</div>
<div class=a style="left:1067px;top:707px;width:40px;height:21px;background:#c6c6c6;"></div>
<div class="a t" style="left:1332.60px;top:712.00px;font-size:12px;color:#333;transform:scaleX(0.8602);">100%</div>
<div class=a style="left:0px;top:728px;width:1365px;height:6px;background:#1c1c1c;"></div>
<div class=a style="left:48px;top:728px;width:288px;height:6px;background:#f0f0f0;"></div>
<div class=a style="left:48px;top:728px;width:288px;height:1px;background:#c8c8c8;"></div>
<div class=a style="left:681px;top:728px;width:49px;height:6px;background:#4a4a4a;"></div>
<div class=a style="left:1362px;top:728px;width:1px;height:6px;background:#777;"></div>
<svg class=a style="left:22px;top:10px;" width="14" height="14" viewBox="0 0 14 14"><path fill="#fff" fill-rule="evenodd" d="M0 0H14V14H0Z M1.6 1.6V7.2H12.4V1.6Z M2.6 9.2V12.5H4.9V10.6H8.6V12.5H11.2V9.2Z"/></svg>
<svg class=a style="left:50px;top:9px;" width="16" height="15" viewBox="0 0 16 15"><path d="M5.5 1.5 L1.8 5.2 L5.5 8.9 M2 5.2 H9.2 A4 4 0 0 1 9.2 13.2 H8" stroke="#74b18e" stroke-width="2" fill="none"/></svg>
<svg class=a style="left:71px;top:14px;" width="8" height="5" viewBox="0 0 8 5"><path d="M1 1 L4 4 L7 1" stroke="#74b18e" stroke-width="1.2" fill="none"/></svg>
<svg class=a style="left:89px;top:9px;" width="16" height="15" viewBox="0 0 16 15"><path d="M10.5 1.5 L14.2 5.2 L10.5 8.9 M14 5.2 H6.8 A4 4 0 0 0 6.8 13.2 H8" stroke="#74b18e" stroke-width="2" fill="none"/></svg>
<svg class=a style="left:110px;top:14px;" width="8" height="5" viewBox="0 0 8 5"><path d="M1 1 L4 4 L7 1" stroke="#74b18e" stroke-width="1.2" fill="none"/></svg>
<svg class=a style="left:132px;top:12px;" width="8" height="9" viewBox="0 0 8 9"><path d="M1 1.5 H7" stroke="#fff" stroke-width="1.1"/><path d="M1 4 H7 L4 7.6 Z" fill="#fff"/></svg>
<svg class=a style="left:1198px;top:9px;" width="16" height="12" viewBox="0 0 16 12"><rect x="1.5" y="1.5" width="12" height="9.5" fill="none" stroke="#f2f8f4" stroke-width="1.1"/><path d="M1.5 3.2 H13.5" stroke="#f2f8f4" stroke-width="1"/><path d="M7.5 11 V5 M5.3 7.2 L7.5 5 L9.7 7.2" stroke="#f2f8f4" stroke-width="1.1" fill="none"/></svg>
<svg class=a style="left:1246px;top:13px;" width="12" height="3" viewBox="0 0 12 3"><path d="M0.5 1.5 H11" stroke="#f2f8f4" stroke-width="1.1"/></svg>
<svg class=a style="left:1291px;top:9px;" width="14" height="13" viewBox="0 0 14 13"><rect x="2.5" y="3.5" width="8" height="8" fill="none" stroke="#f2f8f4" stroke-width="1.1"/><path d="M4.5 1.5 H10.5 Q12.5 1.5 12.5 3.5 V9.5" stroke="#f2f8f4" stroke-width="1.1" fill="none"/></svg>
<svg class=a style="left:1337px;top:9px;" width="14" height="13" viewBox="0 0 14 13"><path d="M1.5 1.2 L12 11.5 M12 1.2 L1.5 11.5" stroke="#f2f8f4" stroke-width="1.2"/></svg>
<svg class=a style="left:1335px;top:40px;" width="18" height="17" viewBox="0 0 18 17"><path d="M1.5 1.5 H16.5 V12 H7.5 L4 15 V12 H1.5 Z" stroke="#f2f8f4" stroke-width="1.2" fill="none" stroke-linejoin="miter"/></svg>
<svg class=a style="left:657px;top:40px;" width="16" height="18" viewBox="0 0 16 18"><path d="M5.6 12.2 V11 C5.6 9.4 2.3 8.4 2.3 6.1 A5.6 5.4 0 0 1 13.5 6.1 C13.5 8.4 10.2 9.4 10.2 11 V12.2 Z" stroke="#f2f8f4" stroke-width="1.1" fill="none"/><path d="M5.6 14.4 H10.2 M6.4 16.5 H9.4" stroke="#f2f8f4" stroke-width="1.1"/></svg>
<svg class=a style="left:16px;top:71px;" width="30" height="32" viewBox="0 0 30 32"><rect x="1" y="4" width="24" height="25" rx="1" fill="#e6c07b"/><rect x="6" y="4" width="14" height="4" fill="#6b6b6b"/><rect x="10" y="1" width="6" height="4" fill="#6b6b6b"/><rect x="12" y="2" width="2" height="1.5" fill="#fff"/><path d="M15.5 12.5 H24.5 L28.5 16.5 V30.5 H15.5 Z" fill="#fff" stroke="#7a7a7a" stroke-width="1"/><path d="M24.5 12.5 V16.5 H28.5" fill="none" stroke="#7a7a7a" stroke-width="1"/></svg>
<svg class=a style="left:25px;top:126px;" width="7" height="5" viewBox="0 0 7 5"><path d="M0.8 0.8 L3.5 3.5 L6.2 0.8" stroke="#444" stroke-width="1.1" fill="none"/></svg>
<svg class=a style="left:53px;top:69px;" width="16" height="17" viewBox="0 0 16 17"><path d="M3.2 1 L11 11 M12.8 1 L5 11" stroke="#5d5d5d" stroke-width="1.6"/><circle cx="4" cy="13.2" r="2.6" fill="#fff" stroke="#6d9bd1" stroke-width="1.3"/><circle cx="12" cy="13.2" r="2.6" fill="#fff" stroke="#6d9bd1" stroke-width="1.3"/></svg>
<svg class=a style="left:52px;top:93px;" width="17" height="16" viewBox="0 0 17 16"><path d="M1.5 1.5 H6 L8.5 4 V11.5 H1.5 Z" fill="#fff" stroke="#6b6b6b"/><path d="M7.5 4.5 H12 L15.5 8 V14.5 H7.5 Z" fill="#fff" stroke="#6b6b6b"/><path d="M3 5 H5.5 M3 7 H6 M3 9 H6 M9 8.5 H12.5 M9 10.5 H14 M9 12.5 H14" stroke="#6a8fb5" stroke-width="1"/></svg>
<svg class=a style="left:75px;top:99px;" width="7" height="5" viewBox="0 0 7 5"><path d="M0.8 0.8 L3.5 3.5 L6.2 0.8" stroke="#444" stroke-width="1.1" fill="none"/></svg>
<svg class=a style="left:52px;top:116px;" width="18" height="16" viewBox="0 0 18 16"><path d="M12 1.5 L16.5 6 L13.5 9 L9 4.5 Z" fill="#6b6b6b"/><path d="M9.2 5.2 L12.8 8.8 L8 14.5 L1.5 9.5 Z" fill="#e3bd73"/><path d="M9.6 5.6 L12.4 8.4 L10.8 10 L8 7.2 Z" fill="#6b6b6b"/></svg>
<svg class=a style="left:261.5px;top:84.5px;" width="6" height="3.2" viewBox="0 0 6 3.2"><path d="M0 0 H6 L3.0 3.2 Z" fill="#555"/></svg>
<svg class=a style="left:218.5px;top:84.5px;" width="6" height="3.2" viewBox="0 0 6 3.2"><path d="M0 0 H6 L3.0 3.2 Z" fill="#555"/></svg>
<svg class=a style="left:648px;top:84.5px;" width="6" height="3.2" viewBox="0 0 6 3.2"><path d="M0 0 H6 L3.0 3.2 Z" fill="#555"/></svg>
<div class="a t" style="left:280.40px;top:80.00px;font-size:14px;color:#5f5f5f;transform:scaleX(0.9852);">A</div>
<svg class=a style="left:287px;top:78px;" width="7" height="4" viewBox="0 0 7 4"><path d="M0.5 3.5 L3.5 0.5 L6.5 3.5 Z" fill="#5b80a8"/></svg>
<div class="a t" style="left:305.20px;top:83.00px;font-size:11px;color:#616161;transform:scaleX(1.1040);">A</div>
<svg class=a style="left:311.5px;top:78.5px;" width="6" height="4" viewBox="0 0 6 4"><path d="M0.5 0.5 H5.5 L3 3.5 Z" fill="#5b80a8"/></svg>
<div class="a t" style="left:110.80px;top:111.00px;font-size:12px;color:#3a3a3a;font-weight:700;transform:scaleX(0.9808);">N</div>
<div class="a t" style="left:134.40px;top:111.00px;font-size:12px;color:#3a3a3a;font-weight:700;font-style:italic;transform:scaleX(0.9808);">K</div>
<div class="a t" style="left:160.00px;top:111.00px;font-size:12px;color:#3a3a3a;font-weight:700;transform:scaleX(0.7746);">S</div>
<div class=a style="left:159px;top:122px;width:9px;height:2px;background:#3a3a3a;"></div>
<svg class=a style="left:176.5px;top:115px;" width="8" height="5" viewBox="0 0 8 5"><path d="M1 1 L4 4 L7 1" stroke="#444" stroke-width="1.2" fill="none"/></svg>
<div class=a style="left:193px;top:107px;width:1px;height:21px;background:#d0d0d0;"></div>
<svg class=a style="left:201px;top:109px;" width="16" height="15" viewBox="0 0 16 15"><path d="M1.5 1.5 H14.5 V13.5 M1.5 1.5 V13.5 M8 1.5 V13.5 M1.5 7.5 H14.5" stroke="#777" stroke-width="1" stroke-dasharray="1 1" fill="none"/><path d="M1 13.5 H15" stroke="#555" stroke-width="1.2"/></svg>
<svg class=a style="left:222.5px;top:115px;" width="8" height="5" viewBox="0 0 8 5"><path d="M1 1 L4 4 L7 1" stroke="#444" stroke-width="1.2" fill="none"/></svg>
<div class=a style="left:239px;top:107px;width:1px;height:21px;background:#d0d0d0;"></div>
<svg class=a style="left:246px;top:107px;" width="19" height="19" viewBox="0 0 19 19"><path d="M9 2.5 L14.5 8 L8.5 14 L3 8.5 Z" fill="#fff" stroke="#555" stroke-width="1.1"/><path d="M8.5 1 V7" stroke="#555" stroke-width="1.1"/><path d="M14.2 8 Q17.5 9.5 15.5 13 Q13.5 10 14.2 8 Z" fill="#4a7fb5"/><rect x="1" y="14" width="16.5" height="4" fill="#f0ec1e"/></svg>
<svg class=a style="left:269px;top:115px;" width="8" height="5" viewBox="0 0 8 5"><path d="M1 1 L4 4 L7 1" stroke="#444" stroke-width="1.2" fill="none"/></svg>
<div class="a t" style="left:290.00px;top:110.00px;font-size:12px;color:#616161;font-weight:700;transform:scaleX(0.9924);">A</div>
<div class=a style="left:286px;top:121px;width:16px;height:4px;background:#dd1010;"></div>
<svg class=a style="left:308px;top:115px;" width="8" height="5" viewBox="0 0 8 5"><path d="M1 1 L4 4 L7 1" stroke="#444" stroke-width="1.2" fill="none"/></svg>
<svg class=a style="left:339px;top:77px;" width="17" height="9" viewBox="0 0 17 9"><path d="M1 1.5 H15.300000000000011" stroke="#6b6b6b" stroke-width="1.2"/><path d="M2 4.5 H14.300000000000011" stroke="#6b6b6b" stroke-width="1.2"/><path d="M1 7.5 H15.300000000000011" stroke="#6b6b6b" stroke-width="1.2"/></svg>
<div class=a style="left:360px;top:75px;width:22px;height:23px;background:#c6c6c6;box-sizing:border-box;border:1px solid #808080"></div>
<svg class=a style="left:363px;top:81px;" width="17" height="9" viewBox="0 0 17 9"><path d="M1 1.5 H15" stroke="#6b6b6b" stroke-width="1.2"/><path d="M2 4.5 H14" stroke="#6b6b6b" stroke-width="1.2"/><path d="M1 7.5 H15" stroke="#6b6b6b" stroke-width="1.2"/></svg>
<svg class=a style="left:387px;top:86px;" width="17" height="9" viewBox="0 0 17 9"><path d="M1 1.5 H15.300000000000011" stroke="#6b6b6b" stroke-width="1.2"/><path d="M2 4.5 H14.300000000000011" stroke="#6b6b6b" stroke-width="1.2"/><path d="M1 7.5 H15.300000000000011" stroke="#6b6b6b" stroke-width="1.2"/></svg>
<svg class=a style="left:339px;top:111px;" width="17" height="12" viewBox="0 0 17 12"><path d="M1 1.5 H15.300000000000011" stroke="#6b6b6b" stroke-width="1.2"/><path d="M1 4.5 H11.5" stroke="#6b6b6b" stroke-width="1.2"/><path d="M1 7.5 H15.300000000000011" stroke="#6b6b6b" stroke-width="1.2"/><path d="M1 10.5 H11.5" stroke="#6b6b6b" stroke-width="1.2"/></svg>
<div class=a style="left:360px;top:106px;width:22px;height:23px;background:#c6c6c6;box-sizing:border-box;border:1px solid #808080"></div>
<svg class=a style="left:363px;top:111px;" width="17" height="12" viewBox="0 0 17 12"><path d="M1 1.5 H15" stroke="#6b6b6b" stroke-width="1.2"/><path d="M3 4.5 H13" stroke="#6b6b6b" stroke-width="1.2"/><path d="M1 7.5 H15" stroke="#6b6b6b" stroke-width="1.2"/><path d="M3 10.5 H13" stroke="#6b6b6b" stroke-width="1.2"/></svg>
<svg class=a style="left:387px;top:111px;" width="17" height="12" viewBox="0 0 17 12"><path d="M1 1.5 H15.300000000000011" stroke="#6b6b6b" stroke-width="1.2"/><path d="M5 4.5 H15.300000000000011" stroke="#6b6b6b" stroke-width="1.2"/><path d="M1 7.5 H15.300000000000011" stroke="#6b6b6b" stroke-width="1.2"/><path d="M5 10.5 H15.300000000000011" stroke="#6b6b6b" stroke-width="1.2"/></svg>
<svg class=a style="left:410px;top:76px;" width="22" height="19" viewBox="0 0 22 19"><text x="0" y="0" transform="translate(6.5 14.5) rotate(-50)" font-family="Liberation Sans" font-size="10.5" fill="#555">ab</text><path d="M8.5 16 L17.5 7" stroke="#555" stroke-width="1.2"/><path d="M14.5 6.8 L18 6.5 L17.7 10" stroke="#555" stroke-width="1.1" fill="none"/></svg>
<svg class=a style="left:432px;top:84.5px;" width="8" height="5" viewBox="0 0 8 5"><path d="M1 1 L4 4 L7 1" stroke="#444" stroke-width="1.2" fill="none"/></svg>
<div class=a style="left:459px;top:74px;width:1px;height:55px;background:#d0d0d0;"></div>
<div class="a t" style="left:469.20px;top:78.00px;font-size:10px;color:#5f5f5f;transform:scaleX(1.0249);">ab</div>
<div class="a t" style="left:469.60px;top:85.00px;font-size:10px;color:#5f5f5f;transform:scaleX(0.8400);">c</div>
<svg class=a style="left:475px;top:88px;" width="7" height="5" viewBox="0 0 7 5"><path d="M5.5 0.5 V3 H1.5 M3 1.5 L1.2 3 L3 4.5" stroke="#5a86b8" stroke-width="1" fill="none"/></svg>
<svg class=a style="left:411px;top:109px;" width="19" height="15" viewBox="0 0 19 15"><path d="M1 1.5 H17 M9.5 4.5 H17 M9.5 7.5 H17 M9.5 10.5 H17 M1 13.5 H17" stroke="#6b6b6b" stroke-width="1.2"/><path d="M1.5 7.5 L5 4.2 V6.2 H8.2 V8.8 H5 V10.8 Z" fill="#4e83bd"/></svg>
<svg class=a style="left:435px;top:109px;" width="19" height="15" viewBox="0 0 19 15"><path d="M1 1.5 H17 M9.5 4.5 H17 M9.5 7.5 H17 M9.5 10.5 H17 M1 13.5 H17" stroke="#6b6b6b" stroke-width="1.2"/><path d="M8.5 7.5 L5 4.2 V6.2 H1.5 V8.8 H5 V10.8 Z" fill="#4e83bd"/></svg>
<svg class=a style="left:466px;top:108px;" width="17" height="17" viewBox="0 0 17 17"><rect x="1.5" y="1.5" width="14" height="14" fill="#fff" stroke="#6b6b6b" stroke-width="1.2"/><path d="M1.5 4.7 H15.5 M1.5 12.3 H15.5 M8.5 1.5 V4.7 M8.5 12.3 V15.5" stroke="#6b6b6b" stroke-width="1.1"/><path d="M4 8.5 H13 M5.5 7 L4 8.5 L5.5 10 M11.5 7 L13 8.5 L11.5 10" stroke="#4e83bd" stroke-width="1" fill="none"/></svg>
<svg class=a style="left:489px;top:115.5px;" width="8" height="5" viewBox="0 0 8 5"><path d="M1 1 L4 4 L7 1" stroke="#444" stroke-width="1.2" fill="none"/></svg>
<svg class=a style="left:84px;top:143px;" width="10" height="10" viewBox="0 0 10 10"><path d="M0.5 8 V1.5 H8" stroke="#444" stroke-width="1.1" fill="none"/><path d="M3 4 L7.5 8.5" stroke="#333" stroke-width="1.3"/><path d="M4.5 9 H8.6 V4.9 Z" fill="#333"/></svg>
<svg class=a style="left:316px;top:143px;" width="10" height="10" viewBox="0 0 10 10"><path d="M0.5 8 V1.5 H8" stroke="#444" stroke-width="1.1" fill="none"/><path d="M3 4 L7.5 8.5" stroke="#333" stroke-width="1.3"/><path d="M4.5 9 H8.6 V4.9 Z" fill="#333"/></svg>
<svg class=a style="left:498px;top:143px;" width="10" height="10" viewBox="0 0 10 10"><path d="M0.5 8 V1.5 H8" stroke="#444" stroke-width="1.1" fill="none"/><path d="M3 4 L7.5 8.5" stroke="#333" stroke-width="1.3"/><path d="M4.5 9 H8.6 V4.9 Z" fill="#333"/></svg>
<svg class=a style="left:654px;top:143px;" width="10" height="10" viewBox="0 0 10 10"><path d="M0.5 8 V1.5 H8" stroke="#444" stroke-width="1.1" fill="none"/><path d="M3 4 L7.5 8.5" stroke="#333" stroke-width="1.3"/><path d="M4.5 9 H8.6 V4.9 Z" fill="#333"/></svg>
<div class="a t" style="left:525.60px;top:108.00px;font-size:16px;color:#6b6b6b;transform:scaleX(0.8878);">$</div>
<svg class=a style="left:543.2px;top:115px;" width="8" height="5" viewBox="0 0 8 5"><path d="M1 1 L4 4 L7 1" stroke="#444" stroke-width="1.2" fill="none"/></svg>
<div class="a t" style="left:562.70px;top:111.00px;font-size:14px;color:#6b6b6b;transform:scaleX(1.0202);">%</div>
<div class="a t" style="left:584.80px;top:112.26px;font-size:9.5px;color:#6b6b6b;font-weight:700;transform:scaleX(0.9464);">000</div>
<div class=a style="left:608px;top:107px;width:1px;height:21px;background:#d0d0d0;"></div>
<svg class=a style="left:614px;top:108px;" width="18" height="17" viewBox="0 0 18 17"><path d="M1.5 5.5 H8 M4 3 L1.5 5.5 L4 8" stroke="#4e83bd" stroke-width="1.3" fill="none"/><text x="9.5" y="7.6" font-family="Liberation Sans" font-weight="700" font-size="7.5" fill="#6b6b6b">0</text><text x="3" y="15" font-family="Liberation Sans" font-weight="700" font-size="7.5" fill="#6b6b6b">,00</text></svg>
<svg class=a style="left:638px;top:108px;" width="18" height="17" viewBox="0 0 18 17"><path d="M1.5 12.8 H8 M5.5 10.3 L8 12.8 L5.5 15.3" stroke="#4e83bd" stroke-width="1.3" fill="none"/><text x="3" y="7.6" font-family="Liberation Sans" font-weight="700" font-size="7.5" fill="#6b6b6b">,00</text><text x="8" y="15" font-family="Liberation Sans" font-weight="700" font-size="7.5" fill="#6b6b6b">,0</text></svg>
<svg class=a style="left:698px;top:71px;" width="34" height="33" viewBox="0 0 34 33"><rect x="1.5" y="1.5" width="28" height="24" fill="#fff" stroke="#7a7a7a" stroke-width="1.1"/><rect x="9" y="1.5" width="6" height="6" fill="#d6603a"/><rect x="9" y="7.5" width="11" height="6" fill="#3d7cc4"/><rect x="9" y="13.5" width="10" height="6" fill="#d6603a"/><rect x="9" y="19.5" width="4" height="6" fill="#3d7cc4"/><path d="M1.5 7.5 H29.5 M1.5 13.5 H29.5 M1.5 19.5 H29.5 M9 1.5 V25.5 M20.5 1.5 V25.5" stroke="#7a7a7a" stroke-width="1" fill="none"/><rect x="16" y="18.5" width="15.5" height="12" fill="#fff" stroke="#7a7a7a" stroke-width="1.1"/><path d="M20 22.5 H27.5 M20 26 H27.5 M26 20.5 L21.5 28" stroke="#333" stroke-width="1.1"/></svg>
<svg class=a style="left:776px;top:72px;" width="33" height="31" viewBox="0 0 33 31"><rect x="1.5" y="2" width="25" height="20.5" fill="#fff" stroke="#7a7a7a" stroke-width="1.1"/><rect x="7.5" y="7.5" width="19" height="15" fill="#c4d5e8"/><path d="M1.5 7.5 H26.5 M1.5 12.5 H26.5 M1.5 17.5 H26.5 M7.5 2 V22.5 M13.5 2 V22.5 M20 2 V22.5" stroke="#7a7a7a" stroke-width="1" fill="none"/><path d="M30.2 9 L24.5 15.5" stroke="#6b6b6b" stroke-width="4" stroke-linecap="round"/><path d="M23.3 16.8 L21.2 19.2" stroke="#7a7a7a" stroke-width="3"/><path d="M19 19.5 Q22 22 19 25.5 Q14 29.5 8 29.5 Q10.5 24 14 21 Q16.5 18.5 19 19.5 Z" fill="#3d7cc4"/><path d="M16.5 21 Q18.5 21.5 18 23.5 Q16 25 14.5 24 Q14.8 22 16.5 21 Z" fill="#cfe0f2"/></svg>
<svg class=a style="left:841px;top:71px;" width="33" height="31" viewBox="0 0 33 31"><rect x="1.5" y="1.5" width="26" height="21" fill="#fff" stroke="#7a7a7a" stroke-width="1.1"/><rect x="7.5" y="7" width="15" height="10" fill="#c4d5e8"/><path d="M1.5 7 H27.5 M1.5 17 H27.5 M7.5 1.5 V22.5 M22.5 1.5 V22.5" stroke="#7a7a7a" stroke-width="1" fill="none"/><path d="M30.2 7.5 L24.5 14" stroke="#6b6b6b" stroke-width="4" stroke-linecap="round"/><path d="M23.3 15.3 L21.2 17.7" stroke="#7a7a7a" stroke-width="3"/><path d="M19 18 Q22 20.5 19 24 Q14 28 8 28 Q10.5 22.5 14 19.5 Q16.5 17 19 18 Z" fill="#3d7cc4"/><path d="M16.5 19.5 Q18.5 20 18 22 Q16 23.5 14.5 22.5 Q14.8 20.5 16.5 19.5 Z" fill="#cfe0f2"/></svg>
<svg class=a style="left:741.5px;top:127px;" width="7" height="5" viewBox="0 0 7 5"><path d="M0.8 0.8 L3.5 3.5 L6.2 0.8" stroke="#444" stroke-width="1.1" fill="none"/></svg>
<svg class=a style="left:817.5px;top:127px;" width="7" height="5" viewBox="0 0 7 5"><path d="M0.8 0.8 L3.5 3.5 L6.2 0.8" stroke="#444" stroke-width="1.1" fill="none"/></svg>
<svg class=a style="left:865.5px;top:127px;" width="7" height="5" viewBox="0 0 7 5"><path d="M0.8 0.8 L3.5 3.5 L6.2 0.8" stroke="#444" stroke-width="1.1" fill="none"/></svg>
<svg class=a style="left:901px;top:69px;" width="19" height="18" viewBox="0 0 19 18"><path d="M1.5 1.5 H10.5 V16.5 H1.5 Z M1.5 6.3 H10.5 M1.5 11.3 H10.5 M6 1.5 V6.3 M6 11.3 V16.5" stroke="#666" stroke-width="1.1" fill="#fff"/><rect x="9" y="6.5" width="8.5" height="4.5" fill="#c8c8c8" stroke="#666" stroke-width="1"/><path d="M1.5 8.8 H8 M4 6.5 L1.5 8.8 L4 11.1" stroke="#3d7cc4" stroke-width="1.5" fill="none"/></svg>
<svg class=a style="left:901px;top:92px;" width="19" height="18" viewBox="0 0 19 18"><path d="M1.5 1.5 H10.5 V16.5 H1.5 Z M1.5 6.3 H10.5 M1.5 11.3 H10.5 M6 1.5 V6.3 M6 11.3 V16.5" stroke="#666" stroke-width="1.1" fill="#fff"/><rect x="4" y="7" width="5" height="3.5" fill="#9fb7d3"/><path d="M10.5 5 L16 10.5 M16 5 L10.5 10.5" stroke="#e06a55" stroke-width="1.5"/></svg>
<svg class=a style="left:901px;top:115px;" width="18" height="18" viewBox="0 0 18 18"><path d="M1.5 2.5 H13.5 M3.5 1 L1.5 2.5 L3.5 4 M11.5 1 L13.5 2.5 L11.5 4" stroke="#3d7cc4" stroke-width="1" fill="none"/><path d="M1.5 5.5 H16 V16.5 H1.5 Z M1.5 9.2 H16 M1.5 12.8 H16 M6 5.5 V16.5 M11.5 5.5 V16.5" stroke="#666" stroke-width="1.1" fill="#fff"/><rect x="6" y="9.2" width="5.5" height="3.6" fill="#3d6fa8"/></svg>
<svg class=a style="left:969.5px;top:76px;" width="8" height="5" viewBox="0 0 8 5"><path d="M1 1 L4 4 L7 1" stroke="#444" stroke-width="1.2" fill="none"/></svg>
<svg class=a style="left:973.5px;top:99px;" width="8" height="5" viewBox="0 0 8 5"><path d="M1 1 L4 4 L7 1" stroke="#444" stroke-width="1.2" fill="none"/></svg>
<svg class=a style="left:968.5px;top:122px;" width="8" height="5" viewBox="0 0 8 5"><path d="M1 1 L4 4 L7 1" stroke="#444" stroke-width="1.2" fill="none"/></svg>
<svg class=a style="left:1004px;top:69px;" width="19" height="17" viewBox="0 0 19 17"><path d="M2.5 1.8 H16.5 V4 M2.5 1.8 L9 8.5 L2.5 15.2 H16.5 V13" stroke="#404040" stroke-width="2.2" fill="none" stroke-linejoin="miter"/></svg>
<svg class=a style="left:1027.5px;top:76px;" width="8" height="5" viewBox="0 0 8 5"><path d="M1 1 L4 4 L7 1" stroke="#444" stroke-width="1.2" fill="none"/></svg>
<svg class=a style="left:1006px;top:92px;" width="16" height="18" viewBox="0 0 16 18"><rect x="1" y="1.2" width="13.8" height="15.5" fill="#fff" stroke="#6b6b6b" stroke-width="1.2"/><rect x="1" y="1" width="13.8" height="3" fill="#7a7a7a"/><path d="M7.9 5.5 V13" stroke="#3d7cc4" stroke-width="2"/><path d="M4.2 9.5 L7.9 13.5 L11.6 9.5" stroke="#3d7cc4" stroke-width="2" fill="none"/></svg>
<svg class=a style="left:1025.5px;top:99px;" width="8" height="5" viewBox="0 0 8 5"><path d="M1 1 L4 4 L7 1" stroke="#444" stroke-width="1.2" fill="none"/></svg>
<svg class=a style="left:1006px;top:116px;" width="16" height="15" viewBox="0 0 16 15"><path d="M9.5 1.5 L14.5 6 L8 12.5 L3 8 Z" fill="#e26a80"/><path d="M3 8 L8 12.5 L6 14 L1.2 9.8 Z" fill="#f0a9b6"/></svg>
<svg class=a style="left:1025.5px;top:122px;" width="8" height="5" viewBox="0 0 8 5"><path d="M1 1 L4 4 L7 1" stroke="#444" stroke-width="1.2" fill="none"/></svg>
<div class="a t" style="left:1053.80px;top:72.00px;font-size:15px;color:#4a7ab8;font-weight:700;transform:scaleX(1.0524);">A</div>
<div class="a t" style="left:1054.70px;top:87.00px;font-size:14px;color:#9868b0;font-weight:700;transform:scaleX(1.1343);">Z</div>
<svg class=a style="left:1065px;top:79px;" width="19" height="17" viewBox="0 0 19 17"><path d="M1 1 H18 L11 8.5 V15.5 H7.5 V8.5 Z" fill="#6b6b6b"/><path d="M4 2.8 L8.8 8 V14 H9.6 V7.8" stroke="#fff" stroke-width="0.9" fill="none"/></svg>
<svg class=a style="left:1119px;top:70px;" width="31" height="30" viewBox="0 0 31 30"><circle cx="18.7" cy="11.6" r="8.6" fill="#fff" stroke="#4a7ab8" stroke-width="2"/><path d="M12.5 17.8 L4 26.5" stroke="#4a7ab8" stroke-width="3" stroke-linecap="round"/></svg>
<svg class=a style="left:1080px;top:127px;" width="7" height="5" viewBox="0 0 7 5"><path d="M0.8 0.8 L3.5 3.5 L6.2 0.8" stroke="#444" stroke-width="1.1" fill="none"/></svg>
<svg class=a style="left:1161px;top:127px;" width="7" height="5" viewBox="0 0 7 5"><path d="M0.8 0.8 L3.5 3.5 L6.2 0.8" stroke="#444" stroke-width="1.1" fill="none"/></svg>
<svg class=a style="left:1224px;top:78px;" width="14" height="14" viewBox="0 0 14 14"><circle cx="6.8" cy="6.9" r="5" fill="#f39a1e"/></svg>
<svg class=a style="left:1346px;top:144px;" width="15" height="9" viewBox="0 0 15 9"><path d="M1.5 7.5 L7.5 1.5 L13.5 7.5" stroke="#444" stroke-width="1.2" fill="none"/></svg>
<svg class=a style="left:93px;top:177px;" width="8" height="5" viewBox="0 0 8 5"><path d="M0 0 H7 L3.5 4 Z" fill="#666"/></svg>
<div class=a style="left:121px;top:174.5px;width:2px;height:2px;background:#9a9a9a;"></div>
<div class=a style="left:121px;top:179px;width:2px;height:2px;background:#9a9a9a;"></div>
<div class=a style="left:121px;top:183.5px;width:2px;height:2px;background:#9a9a9a;"></div>
<svg class=a style="left:149px;top:175px;" width="13" height="12" viewBox="0 0 13 12"><path d="M1.5 1.2 L11.5 10.5 M11.5 1.2 L1.5 10.5" stroke="#b0b0b0" stroke-width="1.15"/></svg>
<svg class=a style="left:185px;top:174px;" width="15" height="13" viewBox="0 0 15 13"><path d="M1.5 6.5 L5.5 10.8 L13.5 1.5" stroke="#c6c6c6" stroke-width="2.3" fill="none"/></svg>
<div class="a t" style="left:222.00px;top:174.00px;font-size:14px;color:#6a6a6a;font-weight:700;font-style:italic;font-family:'Liberation Serif',serif;transform:scaleX(1.3942);">f</div>
<div class="a t" style="left:227.50px;top:177.00px;font-size:11px;color:#6a6a6a;font-weight:700;font-style:italic;font-family:'Liberation Serif',serif;transform:scaleX(1.1818);">x</div>
<svg class=a style="left:1348px;top:177px;" width="10" height="6" viewBox="0 0 10 6"><path d="M1 1 L5 4.8 L9 1" stroke="#555" stroke-width="1.3" fill="none"/></svg>
<svg class=a style="left:209px;top:709px;" width="19" height="18" viewBox="0 0 19 18"><path d="M5.8 1.8 A6.3 6.3 0 0 0 6.5 13.6" stroke="#444" stroke-width="1.3" fill="none" stroke-dasharray="2.2 1.3"/><path d="M7.5 0.5 V6.5 H14" stroke="#444" stroke-width="1.1" fill="none"/><path d="M12.3 4.8 L14.3 6.5 L12.3 8.2" stroke="#444" stroke-width="1.1" fill="none"/><path d="M8.6 9 L16.6 16.2 M16.2 9 L8.6 16.2" stroke="#333" stroke-width="1.8"/></svg>
<svg class=a style="left:1079px;top:709px;" width="16" height="15" viewBox="0 0 16 15"><path d="M1.5 1.5 H13.5 V13.5 H1.5 Z M5.5 1.5 V13.5 M9.5 1.5 V13.5 M1.5 5.5 H13.5 M1.5 9.5 H13.5" stroke="#666" stroke-width="1.2" fill="none"/></svg>
<svg class=a style="left:1119px;top:709px;" width="16" height="15" viewBox="0 0 16 15"><rect x="1.5" y="1.5" width="13" height="12.5" fill="none" stroke="#666" stroke-width="1.2"/><rect x="4.3" y="3.8" width="7.4" height="8" fill="none" stroke="#666" stroke-width="1.2"/><path d="M6 6 H10 M6 8 H10 M6 10 H10" stroke="#666" stroke-width="0.9"/></svg>
<svg class=a style="left:1159px;top:709px;" width="16" height="15" viewBox="0 0 16 15"><path d="M1.5 1.5 H14.5 V13.5 H1.5 Z M5.5 1.5 V8.5 M10 1.5 V8.5 M1.5 8.5 H10" stroke="#666" stroke-width="1.2" fill="none"/></svg>
<div class=a style="left:1193px;top:716px;width:8px;height:1px;background:#555;"></div>
<div class=a style="left:1206px;top:716px;width:100px;height:1.5px;background:#555;"></div>
<div class=a style="left:1254px;top:712px;width:5px;height:11px;background:#444;"></div>
<div class=a style="left:1310px;top:716px;width:10px;height:1px;background:#555;"></div>
<div class=a style="left:1314px;top:712px;width:1px;height:9px;background:#555;"></div>
</body></html>
